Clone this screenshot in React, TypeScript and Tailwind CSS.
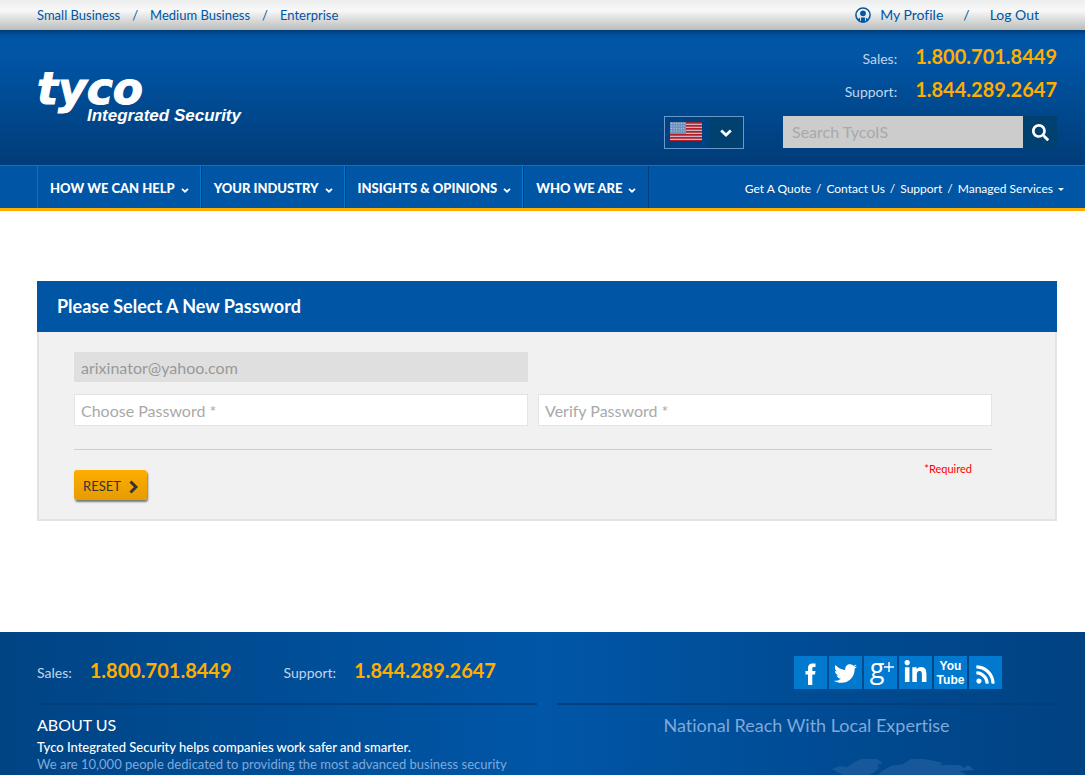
import React from "react";
import { FaFacebookF, FaLinkedinIn, FaRss, FaSearch, FaTwitter } from "react-icons/fa";

const menu = ["HOW WE CAN HELP", "YOUR INDUSTRY", "INSIGHTS & OPINIONS", "WHO WE ARE"];

function Phone({ label, number }: { label: string; number: string }) {
  return (
    <p className="flex h-[33px] items-baseline gap-[18px]">
      <span className="text-sm leading-[33px] text-[#c3d5ea]">{label}</span>
      <a href="#" className="text-xl leading-[33px] font-bold text-[#ffae00]">
        {number}
      </a>
    </p>
  );
}

function ChevronDown({ className }: { className: string }) {
  return (
    <svg viewBox="0 0 12 8" className={className} fill="none" stroke="currentColor" aria-hidden="true">
      <path d="M1.200 1.500L6 6L10.800 1.500" strokeWidth="2.800" />
    </svg>
  );
}

function ChevronRight() {
  return (
    <svg viewBox="0 0 9 14" className="h-[14px] w-[9px]" fill="none" stroke="currentColor" aria-hidden="true">
      <path d="M1.500 1.500L7 7L1.500 12.500" strokeWidth="3" />
    </svg>
  );
}

function ProfileIcon() {
  return (
    <svg viewBox="0 0 16 16" className="size-4" aria-hidden="true">
      <circle cx="8" cy="8" r="7.1" fill="none" stroke="#0055a5" strokeWidth="1.5" />
      <circle cx="8" cy="6.3" r="2.900" fill="#0055a5" />
      <path d="M2.500 12.500L5 10.800V15L3.500 14.200ZM13.500 12.500L11 10.800V15L12.500 14.200Z" fill="#0055a5" />
      <path d="M6 10.500H10V15.500H6Z" fill="#0055a5" />
    </svg>
  );
}

function Flag() {
  return (
    <svg viewBox="0 0 32 19" className="h-[19px] w-8" aria-hidden="true">
      <rect width="32" height="19" fill="#d3b3bc" />
      {[0, 3, 6, 9, 12, 15, 18].map((y) => (
        <rect key={y} y={y} width="32" height="1.700" fill="#b0202c" />
      ))}
      <rect width="16" height="12" fill="#6f93bd" />
      {[1, 3.5, 6, 8.5].map((y) => (
        <path key={y} d={`M1 ${y + 0.5}H15`} stroke="#b3c8dc" strokeWidth="1" strokeDasharray="1 1.500" />
      ))}
    </svg>
  );
}

function Social({ label, children }: { label: string; children: React.ReactNode }) {
  return (
    <a
      href="#"
      aria-label={label}
      className="flex h-[33px] w-[33px] items-center justify-center bg-[#0079cf] text-white"
    >
      {children}
    </a>
  );
}

export default function App() {
  return (
    <div className="flex h-screen flex-col overflow-hidden bg-white font-['Lato',sans-serif] [font-variant-ligatures:none]">
      <div className="flex h-[30px] shrink-0 items-center justify-between bg-linear-to-b from-[#eceeed] via-[#f8f8f8] via-35% to-[#bbbdbd] pr-[46px] pl-[37px] text-[#0055a5]">
        <nav aria-label="Segments" className="flex gap-3 pt-[2px] text-[13px]">
          <a href="#">Small Business</a>
          <span>/</span>
          <a href="#">Medium Business</a>
          <span>/</span>
          <a href="#">Enterprise</a>
        </nav>
        <div className="flex items-center text-sm">
          <a href="#" className="flex items-center gap-[9px]">
            <ProfileIcon />
            My Profile
          </a>
          <span className="mx-5">/</span>
          <a href="#">Log Out</a>
        </div>
      </div>

      <header className="shrink-0">
        <div className="flex h-[135px] justify-between bg-linear-to-b from-[#0055a5] from-20% to-[#003c78] pr-7 pl-[37px] shadow-[inset_0_9px_5px_-7px_rgba(0,40,80,0.7)]">
          <a href="#" className="pt-10 font-bold text-white italic">
            <span className="block font-['DejaVu_Sans',sans-serif] text-[44px] leading-[38px] [-webkit-text-stroke:1px_white]">
              tyco
            </span>
            <span className="block pl-[50px] font-['Liberation_Sans',sans-serif] text-[17px] leading-4">
              Integrated Security
            </span>
          </a>
          <div className="flex flex-col items-end pt-[10px]">
            <Phone label="Sales:" number="1.800.701.8449" />
            <Phone label="Support:" number="1.844.289.2647" />
            <div className="mt-[10px] flex items-start gap-[39px]">
              <button
                type="button"
                aria-label="Choose country"
                className="flex h-[33px] w-20 items-stretch border border-[#6b98cc] bg-[#004280]"
              >
                <span className="flex flex-1 items-center pb-[2px] pl-[5px]">
                  <Flag />
                </span>
                <span className="flex w-[34px] items-center justify-center bg-[#00416f] text-white">
                  <ChevronDown className="h-2 w-3" />
                </span>
              </button>
              <form className="flex h-8" onSubmit={(e) => e.preventDefault()}>
                <input
                  aria-label="Search"
                  placeholder="Search TycoIS"
                  className="w-60 bg-[#ccc] px-[9px] text-base placeholder:text-[#a9a9a9]"
                />
                <button
                  type="submit"
                  aria-label="Submit search"
                  className="flex w-[34px] items-center justify-center bg-[#00416f] text-white"
                >
                  <FaSearch size={17} />
                </button>
              </form>
            </div>
          </div>
        </div>

        <div className="flex h-[46px] justify-between border-t border-b-3 border-t-[#0077d0] border-b-[#ffae00] bg-[#0055a5] pr-[21px] pl-[37px]">
          <nav aria-label="Main" className="flex border-l border-[#0077d0]">
            {menu.map((item) => (
              <button
                key={item}
                type="button"
                className="flex items-center gap-[6px] border-r border-r-[#003f7d] px-3 pt-1 text-[13px] font-black text-white shadow-[inset_-1px_0_0_#0077d0] last:shadow-none"
              >
                {item}
                <ChevronDown className="mt-[2px] h-[5px] w-2" />
              </button>
            ))}
          </nav>
          <nav aria-label="Quick links" className="flex items-center gap-[5px] pt-1 text-xs text-white">
            <a href="#">Get A Quote</a>
            <span>/</span>
            <a href="#">Contact Us</a>
            <span>/</span>
            <a href="#">Support</a>
            <span>/</span>
            <a href="#" className="flex items-center gap-[5px]">
              Managed Services
              <svg viewBox="0 0 6 3" className="h-[3px] w-[6px]" fill="currentColor" aria-hidden="true">
                <path d="M0 0H6L3 3Z" />
              </svg>
            </a>
          </nav>
        </div>
      </header>

      <main className="shrink-0 pt-[70px] pr-7 pb-[111px] pl-[37px]">
        <h1 className="bg-[#0055a5] px-5 py-3 text-lg leading-[27px] font-bold text-white">
          Please Select A New Password
        </h1>
        <form
          className="border-2 border-t-0 border-[#e3e3e3] bg-[#f1f1f1] pt-5 pr-[63px] pb-[19px] pl-[35px]"
          onSubmit={(e) => e.preventDefault()}
        >
          <div className="grid grid-cols-2 gap-x-[10px] gap-y-3">
            <input
              aria-label="Email"
              disabled
              value="arixinator@yahoo.com"
              className="h-[30px] min-w-0 bg-[#dfdfdf] px-[7px] pt-[1px] text-base text-[#999]"
            />
            <input
              aria-label="Choose Password"
              type="password"
              placeholder="Choose Password *"
              className="col-start-1 h-8 min-w-0 border border-[#e3e3e3] bg-white px-[6px] text-base placeholder:text-[#a9a9a9]"
            />
            <input
              aria-label="Verify Password"
              type="password"
              placeholder="Verify Password *"
              className="h-8 min-w-0 border border-[#e3e3e3] bg-white px-[6px] text-base placeholder:text-[#a9a9a9]"
            />
          </div>
          <div className="mt-[23px] flex items-start justify-between border-t border-[#ccc] pr-5">
            <button
              type="submit"
              className="mt-5 flex h-[30px] items-center gap-2 rounded-[3px] bg-linear-to-b from-[#ffae00] to-[#e59c00] px-[9px] pt-[3px] text-[13px] text-[#333] shadow-[1px_2px_2px_rgba(0,0,0,0.5)]"
            >
              RESET
              <ChevronRight />
            </button>
            <p className="mt-3 text-[11px] leading-[14px] text-[#ff0000]">*Required</p>
          </div>
        </form>
      </main>

      <footer className="grid min-h-0 flex-1 grid-cols-2 gap-5 overflow-hidden bg-linear-to-r from-[#004484] via-[#0056a7] to-[#004282] pr-7 pl-[37px]">
        <div>
          <div className="flex h-[73px] gap-[52px] border-b-2 border-[#003f7c] pt-[22px]">
            <Phone label="Sales:" number="1.800.701.8449" />
            <Phone label="Support:" number="1.844.289.2647" />
          </div>
          <h2 className="mt-[9px] text-base leading-[22px] text-white">ABOUT US</h2>
          <p className="pt-[3px] text-[13px] leading-[17px] text-[#7fa9da]">
            <strong className="block font-medium text-white">
              Tyco Integrated Security helps companies work safer and smarter.
            </strong>
            We are 10,000 people dedicated to providing the most advanced business security
            solutions available today. We are your partner.
          </p>
        </div>
        <div>
          <div className="flex h-[73px] justify-end gap-[2px] border-b-2 border-[#003f7c] pt-6 pr-[55px]">
            <Social label="Facebook">
              <svg viewBox="0 0 12 22" className="mt-[2px] h-[22px] w-3" fill="currentColor" aria-hidden="true">
                <path d="M3 22V11.500H0.500V8H3V5Q3 0.500 7.500 0.500H10.500V4H8.500Q7.300 4 7.300 5.300V8H10.500L10 11.500H7.300V22Z" />
              </svg>
            </Social>
            <Social label="Twitter">
              <FaTwitter size={23} className="mt-[2px]" />
            </Social>
            <Social label="Google Plus">
              <span className="pb-[9px] pl-[3px] font-['Open_Sans',sans-serif] text-[27px] leading-6">g</span>
              <svg viewBox="0 0 10 10" className="mb-[11px] size-[10px]" stroke="currentColor" aria-hidden="true">
                <path d="M5 0V10M0 5H10" strokeWidth="1.400" />
              </svg>
            </Social>
            <Social label="LinkedIn">
              <FaLinkedinIn size={25} />
            </Social>
            <Social label="YouTube">
              <span className="text-center font-['Liberation_Sans_Narrow','Liberation_Sans',sans-serif] text-xs leading-[14px] font-bold">
                You
                <br />
                Tube
              </span>
            </Social>
            <Social label="RSS">
              <FaRss size={21} className="mt-1" />
            </Social>
          </div>
          <h2 className="mt-[9px] pr-[1px] text-center text-lg leading-[22px] text-[#7fa9da]">
            National Reach With Local Expertise
          </h2>
          <svg viewBox="0 0 500 40" className="mt-[22px] w-full" fill="#17589b" aria-hidden="true">
            <path d="M275 11L283 8L290 9L299 3L305 1H320L326 5L320 7L322 10L316 15L306 19L298 26L291 19L280 14Z" />
            <path d="M325 13L334 8L346 6L354 1H367L378 3L386 5L382 7L403 7L407 10L411 7L417 12L402 13L424 24L440 40H260L310 22L322 16Z" />
          </svg>
        </div>
      </footer>
    </div>
  );
}
